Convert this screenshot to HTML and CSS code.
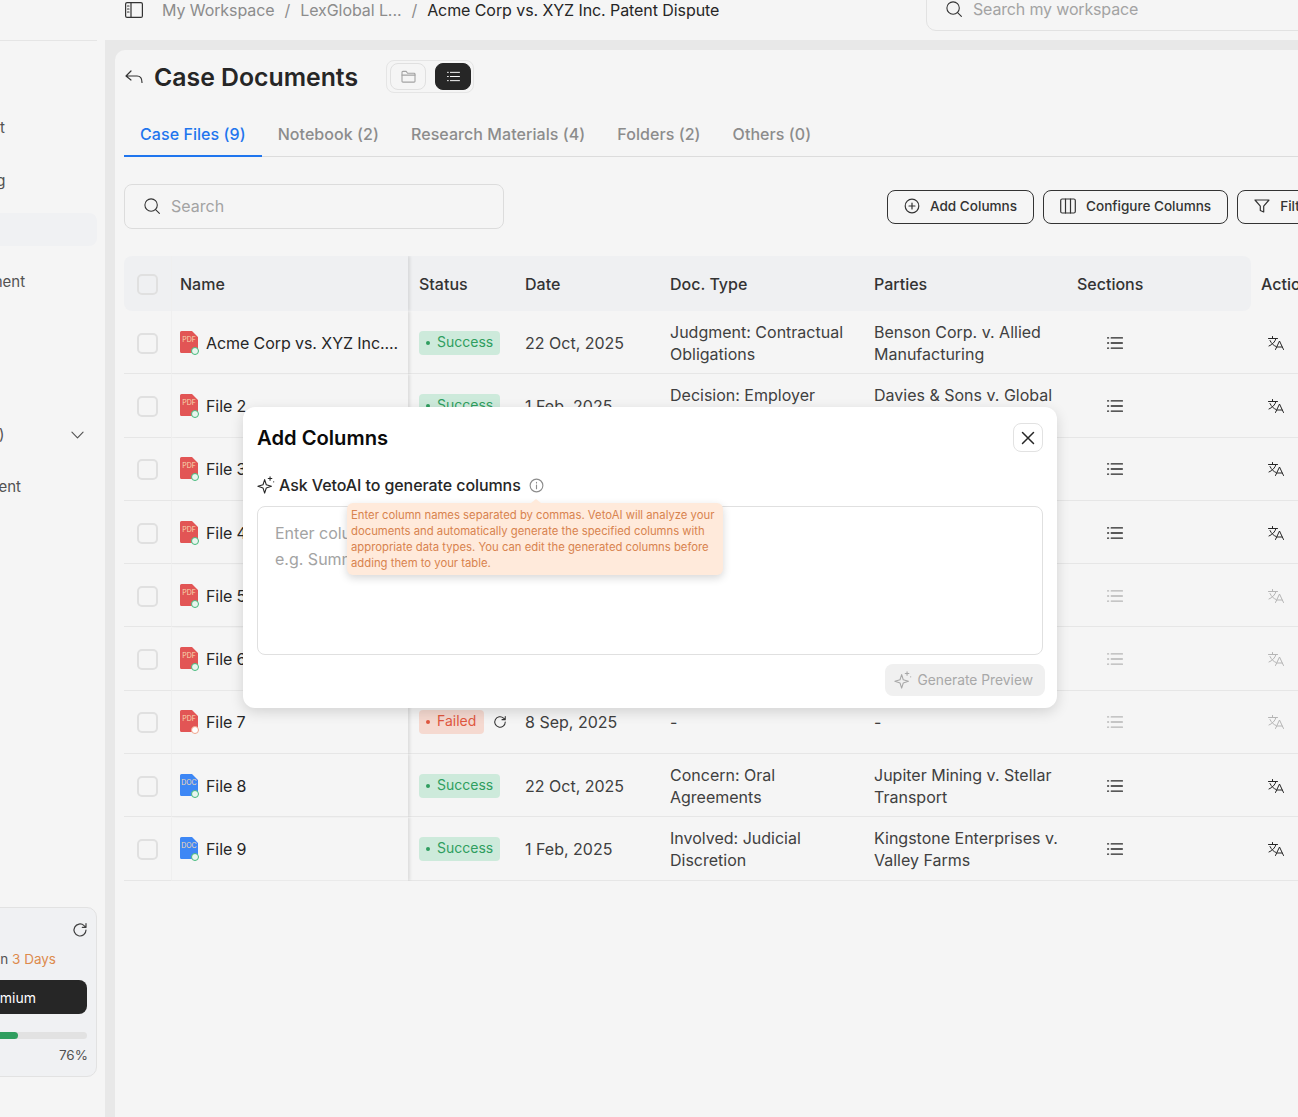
FILE: index.html
```html
<!DOCTYPE html>
<html lang="en">
<head>
    <meta charset="UTF-8">
    <meta name="viewport" content="width=device-width, initial-scale=1.0">
    <title>Case Documents</title>
    <link rel="stylesheet" href="styles.css">
</head>
<body>
    <svg class="icon-defs" width="0" height="0">
        <symbol id="i-search" viewBox="0 0 20 20"><circle cx="9" cy="9" r="6.900"/><path d="M14 14l4.200 4.200"/></symbol>
        <symbol id="i-list" viewBox="0 0 16 16"><path d="M4.200 2.900h11.200M4.200 8h11.200M4.200 13.100h11.200M.6 2.900h1M.6 8h1M.6 13.100h1"/></symbol>
        <symbol id="i-translate" viewBox="0 0 16 14"><path d="M.5 2.500h9M4.500 .5v2M8 2.500C7 6 4.500 8.500 1 10M2 4.500C3.500 7.500 5.500 9.500 8 10.500M7.500 13.500l4-8.500 4 8.500M9 11h5"/></symbol>
        <symbol id="i-spark" viewBox="0 0 20 20"><path d="M8.500 4l1.800 5.700 5.700 1.800-5.700 1.800-1.800 5.700-1.800-5.700L1 11.500l5.700-1.800z"/><path d="M14.500 .8v4M12.500 2.800h4M18.500 6.500h.1"/></symbol>
        <symbol id="i-refresh" viewBox="0 0 16 16"><path d="M14 8a6 6 0 1 1-1.900-4.400L14 5.300M14 1.600v3.700h-3.700"/></symbol>
        <symbol id="i-pdf" viewBox="0 0 18 22"><path d="M1.500 0H12l6 6v14.500a1.500 1.500 0 0 1-1.500 1.500h-15A1.500 1.500 0 0 1 0 20.500v-19A1.500 1.500 0 0 1 1.500 0z"/></symbol>
    </svg>

    <div class="app">
        <aside class="sidebar">
            <div class="side-top"></div>
            <nav class="side-nav">
                <div class="nav-item nav-a">Assistant</div>
                <div class="nav-item nav-b">Drafting</div>
                <div class="nav-item nav-active"></div>
                <div class="nav-item nav-c">Agreement</div>
                <div class="nav-item nav-d">Tools (3)
                    <svg class="chevron" viewBox="0 0 14 8"><path d="M1 1l6 6 6-6"/></svg>
                </div>
                <div class="nav-item nav-e">Document</div>
            </nav>
            <div class="trial-card">
                <svg class="trial-refresh"><use href="#i-refresh"/></svg>
                <p class="trial-text">Trial ends in <span>3 Days</span></p>
                <button class="upgrade">Upgrade to Premium</button>
                <div class="progress"><div class="progress-bar"></div></div>
                <p class="progress-label">76%</p>
            </div>
        </aside>

        <div class="main">
            <header class="topbar">
                <svg class="panel-icon" viewBox="0 0 18 16"><rect x=".6" y=".6" width="16.800" height="14.800" rx="1.500"/><path d="M6 .6v14.800M2.500 4h1.500M2.500 7h1.500M2.500 10h1.500"/></svg>
                <div class="crumbs">
                    <span>My Workspace</span><i>/</i><span>LexGlobal L...</span><i>/</i><b>Acme Corp vs. XYZ Inc. Patent Dispute</b>
                </div>
                <div class="top-search">
                    <svg class="icon-18"><use href="#i-search"/></svg>
                    <span>Search my workspace</span>
                </div>
            </header>

            <section class="panel">
                <div class="title-row">
                    <svg class="back-icon" viewBox="0 0 18 14"><path d="M6 1L1 6l5 4M1 6h11c3 0 5 2 5 6.500"/></svg>
                    <h1>Case Documents</h1>
                    <div class="view-toggle">
                        <button class="view-btn">
                            <svg viewBox="0 0 16 14"><path d="M1 2.500A1 1 0 0 1 2 1.500h3.500l1.500 2h7a1 1 0 0 1 1 1v7.500a1 1 0 0 1-1 1H2a1 1 0 0 1-1-1z"/><path d="M1 5.500h14"/></svg>
                        </button>
                        <button class="view-btn view-on"><svg><use href="#i-list"/></svg></button>
                    </div>
                </div>

                <div class="tabs">
                    <a class="tab tab-on">Case Files (9)</a>
                    <a class="tab">Notebook (2)</a>
                    <a class="tab">Research Materials (4)</a>
                    <a class="tab">Folders (2)</a>
                    <a class="tab">Others (0)</a>
                </div>

                <div class="toolbar">
                    <div class="search">
                        <svg class="icon-18"><use href="#i-search"/></svg>
                        <span>Search</span>
                    </div>
                    <button class="tool-btn">
                        <svg viewBox="0 0 16 16"><circle cx="8" cy="8" r="6.800"/><path d="M8 5v6M5 8h6"/></svg>Add Columns
                    </button>
                    <button class="tool-btn">
                        <svg viewBox="0 0 16 16"><rect x=".7" y="1" width="14.600" height="14" rx="1.500"/><path d="M5.500 1v14M10.500 1v14"/></svg>Configure Columns
                    </button>
                    <button class="tool-btn">
                        <svg viewBox="0 0 16 16"><path d="M1 2h14l-5.300 6.200V14l-3.400-1.500V8.200z"/></svg>Filter
                    </button>
                </div>

                <table class="docs">
                    <colgroup>
                        <col class="c-check"><col class="c-name"><col class="c-status"><col class="c-date">
                        <col class="c-type"><col class="c-parties"><col class="c-sections"><col class="c-actions">
                    </colgroup>
                    <thead>
                        <tr>
                            <th class="cell-check"><span class="checkbox"></span></th>
                            <th class="cell-name">Name</th>
                            <th class="cell-status">Status</th>
                            <th>Date</th>
                            <th>Doc. Type</th>
                            <th>Parties</th>
                            <th>Sections</th>
                            <th>Actions</th>
                        </tr>
                    </thead>
                    <tbody>
                        <tr>
                            <td class="cell-check"><span class="checkbox"></span></td>
                            <td class="cell-name"><div class="file"><span class="file-icon"><svg class="pdf"><use href="#i-pdf"/></svg><em>PDF</em><i class="dot"></i></span>Acme Corp vs. XYZ Inc....</div></td>
                            <td class="cell-status"><span class="badge ok">Success</span></td>
                            <td>22 Oct, 2025</td>
                            <td>Judgment: Contractual Obligations</td>
                            <td class="cell-parties">Benson Corp. v. Allied Manufacturing</td>
                            <td class="cell-icon"><svg class="list"><use href="#i-list"/></svg></td>
                            <td class="cell-lang"><svg class="lang"><use href="#i-translate"/></svg></td>
                        </tr>
                        <tr>
                            <td class="cell-check"><span class="checkbox"></span></td>
                            <td class="cell-name"><div class="file"><span class="file-icon"><svg class="pdf"><use href="#i-pdf"/></svg><em>PDF</em><i class="dot"></i></span>File 2</div></td>
                            <td class="cell-status"><span class="badge ok">Success</span></td>
                            <td>1 Feb, 2025</td>
                            <td>Decision: Employer Liability</td>
                            <td class="cell-parties">Davies &amp; Sons v. Global Freight</td>
                            <td class="cell-icon"><svg class="list"><use href="#i-list"/></svg></td>
                            <td class="cell-lang"><svg class="lang"><use href="#i-translate"/></svg></td>
                        </tr>
                        <tr>
                            <td class="cell-check"><span class="checkbox"></span></td>
                            <td class="cell-name"><div class="file"><span class="file-icon"><svg class="pdf"><use href="#i-pdf"/></svg><em>PDF</em><i class="dot"></i></span>File 3</div></td>
                            <td></td><td></td><td></td><td></td>
                            <td class="cell-icon"><svg class="list"><use href="#i-list"/></svg></td>
                            <td class="cell-lang"><svg class="lang"><use href="#i-translate"/></svg></td>
                        </tr>
                        <tr>
                            <td class="cell-check"><span class="checkbox"></span></td>
                            <td class="cell-name"><div class="file"><span class="file-icon"><svg class="pdf"><use href="#i-pdf"/></svg><em>PDF</em><i class="dot"></i></span>File 4</div></td>
                            <td></td><td></td><td></td><td></td>
                            <td class="cell-icon"><svg class="list"><use href="#i-list"/></svg></td>
                            <td class="cell-lang"><svg class="lang"><use href="#i-translate"/></svg></td>
                        </tr>
                        <tr class="row-off">
                            <td class="cell-check"><span class="checkbox"></span></td>
                            <td class="cell-name"><div class="file"><span class="file-icon"><svg class="pdf"><use href="#i-pdf"/></svg><em>PDF</em><i class="dot"></i></span>File 5</div></td>
                            <td></td><td></td><td></td><td></td>
                            <td class="cell-icon"><svg class="list"><use href="#i-list"/></svg></td>
                            <td class="cell-lang"><svg class="lang"><use href="#i-translate"/></svg></td>
                        </tr>
                        <tr class="row-off">
                            <td class="cell-check"><span class="checkbox"></span></td>
                            <td class="cell-name"><div class="file"><span class="file-icon"><svg class="pdf"><use href="#i-pdf"/></svg><em>PDF</em><i class="dot"></i></span>File 6</div></td>
                            <td></td><td></td><td></td><td></td>
                            <td class="cell-icon"><svg class="list"><use href="#i-list"/></svg></td>
                            <td class="cell-lang"><svg class="lang"><use href="#i-translate"/></svg></td>
                        </tr>
                        <tr class="row-off">
                            <td class="cell-check"><span class="checkbox"></span></td>
                            <td class="cell-name"><div class="file"><span class="file-icon"><svg class="pdf"><use href="#i-pdf"/></svg><em>PDF</em><i class="dot dot-fail"></i></span>File 7</div></td>
                            <td class="cell-status"><div class="status-wrap"><span class="badge fail">Failed</span><svg class="retry"><use href="#i-refresh"/></svg></div></td>
                            <td>8 Sep, 2025</td>
                            <td>-</td>
                            <td class="cell-parties">-</td>
                            <td class="cell-icon"><svg class="list"><use href="#i-list"/></svg></td>
                            <td class="cell-lang"><svg class="lang"><use href="#i-translate"/></svg></td>
                        </tr>
                        <tr>
                            <td class="cell-check"><span class="checkbox"></span></td>
                            <td class="cell-name"><div class="file"><span class="file-icon"><svg class="doc"><use href="#i-pdf"/></svg><em>DOC</em><i class="dot"></i></span>File 8</div></td>
                            <td class="cell-status"><span class="badge ok">Success</span></td>
                            <td>22 Oct, 2025</td>
                            <td>Concern: Oral Agreements</td>
                            <td class="cell-parties">Jupiter Mining v. Stellar Transport</td>
                            <td class="cell-icon"><svg class="list"><use href="#i-list"/></svg></td>
                            <td class="cell-lang"><svg class="lang"><use href="#i-translate"/></svg></td>
                        </tr>
                        <tr>
                            <td class="cell-check"><span class="checkbox"></span></td>
                            <td class="cell-name"><div class="file"><span class="file-icon"><svg class="doc"><use href="#i-pdf"/></svg><em>DOC</em><i class="dot"></i></span>File 9</div></td>
                            <td class="cell-status"><span class="badge ok">Success</span></td>
                            <td>1 Feb, 2025</td>
                            <td>Involved: Judicial Discretion</td>
                            <td class="cell-parties">Kingstone Enterprises v. Valley Farms</td>
                            <td class="cell-icon"><svg class="list"><use href="#i-list"/></svg></td>
                            <td class="cell-lang"><svg class="lang"><use href="#i-translate"/></svg></td>
                        </tr>
                    </tbody>
                </table>
            </section>
        </div>
    </div>

    <div class="modal">
        <div class="modal-head">
            <h2>Add Columns</h2>
            <button class="close"><svg viewBox="0 0 14 14"><path d="M1.500 1.500l11 11M12.500 1.500l-11 11"/></svg></button>
        </div>
        <div class="ask">
            <svg class="ask-spark"><use href="#i-spark"/></svg>
            <span>Ask VetoAI to generate columns</span>
            <svg class="info" viewBox="0 0 16 16"><circle cx="8" cy="8" r="6.800"/><path d="M8 7.500v4M8 4.700v.6"/></svg>
        </div>
        <div class="prompt">
            <p>Enter column names separated by commas</p>
            <p>e.g. Summary, Key Dates, Parties Involved</p>
        </div>
        <div class="modal-foot">
            <button class="generate"><svg><use href="#i-spark"/></svg>Generate Preview</button>
        </div>
        <div class="tooltip">Enter column names separated by commas. VetoAI will analyze your documents and automatically generate the specified columns with appropriate data types. You can edit the generated columns before adding them to your table.</div>
    </div>
</body>
</html>
```

FILE: styles.css
```css
* {
    box-sizing: border-box;
}

html,
body {
    margin: 0;
    height: 100%;
    overflow: hidden;
}

body {
    font-family: Inter, "Liberation Sans", sans-serif;
    background-color: #f5f5f5;
    color: #262626;
    position: relative;
}

button {
    font-family: inherit;
}

svg {
    fill: none;
    stroke: currentColor;
    stroke-width: 1.2;
    stroke-linecap: round;
    stroke-linejoin: round;
    flex-shrink: 0;
}

.icon-defs {
    position: absolute;
}

.icon-18 {
    width: 18px;
    height: 18px;
}

.app {
    display: flex;
    height: 1117px;
    background-color: #e8e8e8;
}

/* sidebar - starts off the left edge of the window */
.sidebar {
    width: 105px;
    flex-shrink: 0;
    background-color: #f5f5f5;
    overflow: hidden;
    display: flex;
    flex-direction: column;
}

.side-top {
    height: 41px;
    width: 97px;
    border-bottom: 1px solid #e5e5e5;
    flex-shrink: 0;
}

.side-nav {
    margin-left: -53px;
    width: 150px;
    padding-top: 77px;
    font-size: 15px;
    color: #525252;
    height: 866px;
    flex-shrink: 0;
}

.nav-item {
    white-space: nowrap;
    line-height: 20px;
    position: relative;
}

.nav-a { margin: 0 0 33px -7px; }
.nav-b { margin: 0 0 22px 2px; }

.nav-active {
    height: 33px;
    background-color: #f0f1f3;
    border-radius: 8px;
    margin-bottom: 26px;
}

.nav-c { margin: 0 0 133px 0; }
.nav-d { margin: 0 0 32px -5px; }
.nav-e { margin-left: 1px; }

.chevron {
    position: absolute;
    right: 13px;
    top: 6px;
    width: 13px;
    height: 8px;
}

.trial-card {
    margin-left: -130px;
    width: 227px;
    height: 170px;
    background-color: #f0f1f3;
    border: 1px solid #e2e2e2;
    border-radius: 10px;
    padding: 14px 9px 0 10px;
    text-align: right;
    flex-shrink: 0;
    font-size: 13.500px;
}

.trial-refresh {
    width: 16px;
    height: 16px;
    display: block;
    margin: 0 -1px 0 auto;
    color: #404040;
}

.trial-text {
    margin: 12px 31px 0 0;
    line-height: 18px;
    color: #525252;
    white-space: nowrap;
}

.trial-text span {
    color: #dd8a4c;
}

.upgrade {
    display: block;
    width: 100%;
    height: 34px;
    margin-top: 12px;
    padding: 0 51px 0 0;
    background-color: #262626;
    color: #fff;
    border: none;
    border-radius: 8px;
    font-size: 14px;
    text-align: right;
    white-space: nowrap;
}

.progress {
    height: 7px;
    margin-top: 18px;
    background-color: #e2e2e2;
    border-radius: 4px;
    overflow: hidden;
}

.progress-bar {
    width: 137px;
    height: 100%;
    background-color: #2f9e5f;
    border-radius: 4px;
}

.progress-label {
    margin: 7px -1px 0 0;
    line-height: 18px;
    color: #525252;
}

/* main column */
.main {
    flex: 1;
    min-width: 0;
    margin-left: 10px;
    display: flex;
    flex-direction: column;
    position: relative;
}

.topbar {
    height: 40px;
    margin-left: -10px;
    padding-left: 20px;
    background-color: #f5f5f5;
    display: flex;
    align-items: flex-start;
    flex-shrink: 0;
}

.panel-icon {
    width: 18px;
    height: 16px;
    margin-top: 2px;
    color: #333;
}

.crumbs {
    margin-left: 19px;
    width: 764px;
    flex-shrink: 0;
    font-size: 16px;
    line-height: 20px;
    color: #8c8c8c;
    white-space: nowrap;
    letter-spacing: -0.005em;
}

.crumbs i {
    font-style: normal;
    margin: 0 10px;
}

.crumbs b {
    font-weight: 400;
    color: #262626;
}

.top-search {
    width: 420px;
    height: 46px;
    margin-top: -15px;
    padding: 2px 14px 0 18px;
    border: 1px solid #e2e2e2;
    border-radius: 10px;
    display: flex;
    align-items: center;
    gap: 10px;
    font-size: 16px;
    letter-spacing: -0.01em;
    color: #a3a3a3;
    flex-shrink: 0;
}

.top-search svg {
    color: #333;
}

.panel {
    flex: 1;
    margin-top: 10px;
    min-height: 0;
    padding-left: 9px;
    background-color: #f5f5f5;
    border-top-left-radius: 10px;
    overflow: hidden;
}

.title-row {
    display: flex;
    align-items: center;
    height: 33px;
    margin-top: 10px;
}

.back-icon {
    width: 18px;
    height: 14px;
    margin-left: 1px;
    color: #333;
}

h1 {
    margin: 0 28px 0 11px;
    padding-top: 1px;
    width: 204px;
    font-size: 24.800px;
    font-weight: 600;
    line-height: 33px;
    white-space: nowrap;
}

.view-toggle {
    width: 88px;
    height: 33px;
    padding: 2px 2px 2px 3px;
    border: 1px solid #e5e5e5;
    border-radius: 8px;
    display: flex;
    justify-content: space-between;
}

.view-btn {
    width: 36px;
    height: 27px;
    padding: 0;
    background: transparent;
    border: 1px solid #e0e0e0;
    border-radius: 8px;
    color: #a3a3a3;
    display: flex;
    align-items: center;
    justify-content: center;
}

.view-btn svg {
    width: 15px;
    height: 13px;
}

.view-on {
    background-color: #262626;
    border-color: #262626;
    color: #fff;
}

.tabs {
    display: flex;
    height: 46px;
    margin-top: 18px;
    border-bottom: 1px solid #dcdcdc;
    align-items: flex-start;
}

.tab {
    height: 46px;
    padding: 12px 16px 0;
    font-size: 16px;
    font-weight: 500;
    line-height: 22px;
    letter-spacing: 0.004em;
    color: #8c8c8c;
    white-space: nowrap;
}

.tab-on {
    color: #1f75ee;
    border-bottom: 2px solid #1f75ee;
}

.toolbar {
    display: flex;
    align-items: center;
    gap: 9px;
    margin-top: 27px;
    height: 45px;
}

.search {
    width: 380px;
    height: 45px;
    margin-right: 374px;
    padding: 0 0 1px 18px;
    border: 1px solid #dcdcdc;
    border-radius: 8px;
    display: flex;
    align-items: center;
    gap: 10px;
    font-size: 16px;
    color: #a3a3a3;
    flex-shrink: 0;
}

.search svg {
    color: #333;
}

.tool-btn {
    height: 34px;
    padding: 0 16px 1px;
    background: transparent;
    border: 1px solid #333;
    border-radius: 8px;
    display: flex;
    align-items: center;
    gap: 10px;
    font-size: 13.550px;
    font-weight: 500;
    color: #333;
    white-space: nowrap;
    flex-shrink: 0;
}

.tool-btn svg {
    width: 16px;
    height: 16px;
}

/* documents table */
.docs {
    width: 1227px;
    margin-top: 27px;
    table-layout: fixed;
    border-collapse: separate;
    border-spacing: 0;
    font-size: 16px;
    color: #404040;
}

.c-check { width: 47px; }
.c-name { width: 237px; }
.c-status { width: 107px; }
.c-date { width: 145px; }
.c-type { width: 204px; }
.c-parties { width: 203px; }
.c-sections { width: 184px; }
.c-actions { width: 100px; }

.docs th {
    height: 55px;
    padding: 1px 10px 0;
    background-color: #eff0f2;
    text-align: left;
    font-weight: 500;
    color: #333;
    white-space: nowrap;
}

.docs th:first-child {
    border-radius: 8px 0 0 8px;
}

.docs th:nth-child(7) {
    border-radius: 0 8px 8px 0;
}

.docs th:last-child {
    background-color: transparent;
}

.docs td {
    height: 63.300px;
    padding: 1px 10px 0;
    line-height: 22px;
    border-bottom: 1px solid #e6e6e6;
}

.docs th.cell-check,
.docs td.cell-check {
    padding: 0;
    text-align: center;
}

.docs .cell-name {
    border-left: 1px solid #efefef;
    box-shadow: 2px 0 3px rgba(0, 0, 0, 0.1);
    clip-path: inset(0 -6px 0 0);
    padding-left: 8px;
}

.docs td.cell-name {
    color: #262626;
    font-weight: 400;
}

.docs .cell-status {
    padding-left: 11px;
}

.docs td.cell-parties {
    padding-right: 0;
}

.checkbox {
    display: inline-block;
    width: 21px;
    height: 21px;
    border: 2px solid #e0e0e0;
    border-radius: 5px;
    vertical-align: middle;
}

.file {
    display: flex;
    align-items: center;
    gap: 8px;
    white-space: nowrap;
    overflow: hidden;
    letter-spacing: -0.005em;
}

.file-icon {
    position: relative;
    width: 18px;
    height: 24px;
    flex-shrink: 0;
}

.file-icon svg {
    width: 18px;
    height: 22px;
    display: block;
    stroke: none;
}

.pdf { fill: #e25555; }
.doc { fill: #3d87f5; }

.file-icon em {
    position: absolute;
    left: 0;
    top: 5px;
    width: 18px;
    text-align: center;
    font-style: normal;
    font-size: 7px;
    line-height: 8px;
    color: #f7dcb0;
}

.dot {
    position: absolute;
    right: -1px;
    bottom: 0;
    width: 8px;
    height: 8px;
    border-radius: 50%;
    background-color: #e8f5ee;
    border: 1.5px solid #45b97c;
}

.dot-fail {
    background-color: #fff;
    border-color: #f0a58c;
}

.badge {
    display: inline-block;
    height: 24px;
    padding: 0 7px 0 18px;
    border-radius: 4px;
    font-size: 14px;
    line-height: 22px;
    position: relative;
    vertical-align: middle;
}

.badge::before {
    content: "";
    position: absolute;
    left: 7px;
    top: 10px;
    width: 4px;
    height: 4px;
    border-radius: 50%;
    background-color: currentColor;
}

.ok {
    background-color: #cdeadb;
    color: #2f9e5f;
}

.fail {
    padding-right: 8px;
    background-color: #f5d9d0;
    color: #e0573f;
}

.status-wrap {
    display: flex;
    align-items: center;
    gap: 9px;
}

.retry {
    width: 14px;
    height: 14px;
    color: #333;
}

.docs td.cell-icon {
    padding-left: 40px;
}

.docs td.cell-lang {
    padding-left: 17px;
}

.list {
    width: 16px;
    height: 16px;
    display: block;
    color: #262626;
    stroke-width: 1.3;
}

.lang {
    width: 16px;
    height: 14px;
    display: block;
    color: #262626;
    stroke-width: 1;
}

.row-off .list,
.row-off .lang {
    color: #b5b5b5;
}

/* add columns dialog */
.modal {
    position: absolute;
    left: 243px;
    top: 407px;
    width: 814px;
    height: 301px;
    padding: 16px 14px 0;
    background-color: #fff;
    border-radius: 12px;
    box-shadow: 0 4px 14px rgba(0, 0, 0, 0.14);
}

.modal-head {
    display: flex;
    align-items: center;
    justify-content: space-between;
    height: 29px;
}

h2 {
    margin: 0;
    font-size: 20.200px;
    font-weight: 600;
    color: #0a0a0a;
}

.close {
    width: 30px;
    height: 29px;
    padding: 0;
    background: #fff;
    border: 1px solid #e2e2e2;
    border-radius: 8px;
    color: #262626;
    display: flex;
    align-items: center;
    justify-content: center;
}

.close svg {
    width: 14px;
    height: 14px;
    stroke-width: 1.5;
}

.ask {
    display: flex;
    align-items: center;
    margin-top: 23px;
    height: 20px;
    font-size: 16px;
    font-weight: 500;
    letter-spacing: -0.005em;
}

.ask-spark {
    width: 18px;
    height: 18px;
    margin-right: 4px;
}

.info {
    width: 15px;
    height: 15px;
    margin-left: 8px;
    color: #8c8c8c;
}

.prompt {
    height: 149px;
    margin-top: 11px;
    padding: 13px 17px;
    border: 1px solid #e0e0e0;
    border-radius: 8px;
    font-size: 16px;
    line-height: 26px;
    color: #a3a3a3;
}

.prompt p {
    margin: 0;
}

.modal-foot {
    display: flex;
    justify-content: flex-end;
    margin: 9px -2px 0 0;
}

.generate {
    height: 32px;
    padding: 0 12px 1px 9px;
    background-color: #f0f0f0;
    border: none;
    border-radius: 8px;
    display: flex;
    align-items: center;
    gap: 5px;
    font-size: 13.800px;
    color: #a8a8a8;
}

.generate svg {
    width: 18px;
    height: 18px;
}

.tooltip {
    position: absolute;
    left: 104px;
    top: 96px;
    width: 376px;
    height: 72px;
    padding: 4px;
    background-color: #ffeadb;
    border-radius: 6px;
    box-shadow: 0 3px 8px rgba(0, 0, 0, 0.16);
    font-size: 11.300px;
    line-height: 16px;
    color: #d8834e;
}

.tooltip::before {
    content: "";
    position: absolute;
    left: 184px;
    top: -4px;
    border-left: 5px solid transparent;
    border-right: 5px solid transparent;
    border-bottom: 4px solid #ffeadb;
}
```
